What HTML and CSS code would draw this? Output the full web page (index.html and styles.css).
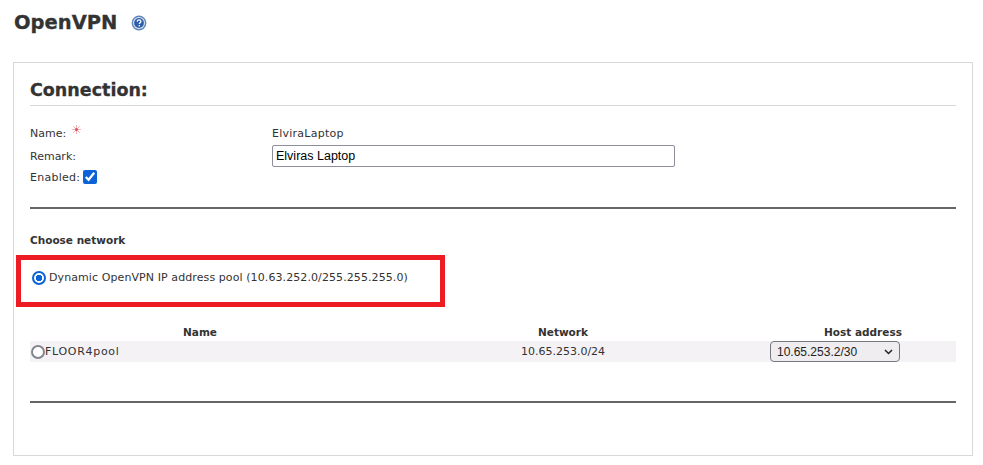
FILE: index.html
```html
<!DOCTYPE html>
<html lang="en">
<head>
<meta charset="utf-8">
<title>OpenVPN</title>
<link rel="stylesheet" href="styles.css">
</head>
<body>
<header class="page-head">
  <h1 class="page-title">OpenVPN</h1>
  <svg class="help" viewBox="0 0 16 16" width="16" height="16" aria-hidden="true">
    <circle cx="8" cy="8" r="7.4" fill="#5f86bd"/>
    <circle cx="8" cy="8" r="6" fill="#dfe8f4"/>
    <circle cx="8" cy="8" r="4.9" fill="#2f5fa8"/>
    <path d="M6.2 6.6C6.3 5.4 7 4.9 8 4.9c1.100 0 1.900.6 1.900 1.600 0 1.400-1.600 1.300-1.600 2.600" fill="none" stroke="#fff" stroke-width="1.300"/>
    <rect x="7.600" y="10" width="1.400" height="1.400" fill="#fff"/>
  </svg>
</header>
<main class="panel">
  <h2 class="section-title">Connection:</h2>
  <div class="fields">
    <div class="field"><span class="label name-label">Name: <svg class="req" viewBox="0 0 9 9" width="9" height="9" aria-hidden="true"><path d="M4.500 0v9M0 4.500h9M1.300 1.300l6.400 6.400M7.700 1.300L1.300 7.700" stroke="#f2b3b3" stroke-width="1"/><circle cx="4.500" cy="4.500" r="1.500" fill="#d9565c"/></svg></span><span class="value">ElviraLaptop</span></div>
    <div class="field"><label class="label" for="remark">Remark:</label><input class="text-input" id="remark" type="text" value="Elviras Laptop"></div>
    <div class="field-enabled"><label class="enabled-label" for="enabled">Enabled:</label><input class="check" id="enabled" type="checkbox" checked></div>
  </div>
  <hr class="rule rule-top">
  <h3 class="choose">Choose network</h3>
  <div class="highlight">
    <label class="pool"><input class="radio" type="radio" name="net" checked>Dynamic OpenVPN IP address pool (10.63.252.0/255.255.255.0)</label>
  </div>
  <table class="nets">
    <thead>
      <tr><th class="c-name">Name</th><th class="c-net">Network</th><th class="c-host">Host address</th></tr>
    </thead>
    <tbody>
      <tr>
        <td class="cell-name"><label class="pool-name"><input class="radio" type="radio" name="net">FLOOR4pool</label></td>
        <td class="cell-net">10.65.253.0/24</td>
        <td class="cell-host">
          <div class="select-wrap">
            <select class="host-select"><option>10.65.253.2/30</option></select>
            <svg class="chevron" viewBox="0 0 9 6" width="9" height="6" aria-hidden="true"><path d="M1 1l3.500 3.500L8 1" fill="none" stroke="#222" stroke-width="1.500"/></svg>
          </div>
        </td>
      </tr>
    </tbody>
  </table>
  <hr class="rule rule-bottom">
</main>
</body>
</html>
```
FILE: styles.css
```css
* { box-sizing: border-box; }
html, body { margin: 0; padding: 0; background: #fff; }
body {
  width: 983px;
  height: 465px;
  overflow: hidden;
  font-family: "DejaVu Sans", sans-serif;
  font-size: 11px;
  color: #333;
}
.page-head {
  display: flex;
  align-items: center;
  gap: 14px;
  height: 62px;
  padding: 0 0 16px 14px;
}
.page-title { margin: 0; font-size: 19.500px; font-weight: 700; color: #333; line-height: 46px; -webkit-text-stroke: .3px #333; }
.help { display: block; margin-top: -1px; }
.panel {
  margin-left: 13px;
  width: 960px;
  height: 394px;
  border: 1px solid #d8d8d8;
  padding: 16px 16px 0;
}
.section-title {
  margin: 0;
  height: 27px;
  border-bottom: 1px solid #d8d8d8;
  font-size: 17.500px;
  line-height: 22px;
  font-weight: 700;
  color: #333;
  -webkit-text-stroke: .3px #333;
}
.fields { padding-top: 16px; }
.field { display: flex; align-items: center; height: 23px; }
.label { width: 242px; }
.name-label { display: flex; align-items: center; gap: 6px; }
.req { margin-top: -9px; }
.value { color: #333; letter-spacing: .25px; }
.text-input {
  align-self: flex-start;
  width: 403px;
  height: 22px;
  padding: 0 3px;
  border: 1px solid #8d8d9d;
  border-radius: 2px;
  font-family: "Liberation Sans", sans-serif;
  font-size: 12.500px;
  color: #000;
}
.field-enabled { display: flex; align-items: center; height: 18px; gap: 3px; }
.enabled-label { letter-spacing: .25px; }
.check { width: 14px; height: 14px; margin: 0; accent-color: #0b63d8; }
.rule { border: 0; height: 2px; background: #666; margin: 0; }
.rule-top { margin-top: 21px; }
.choose { margin: 25px 0 0; font-size: 10.500px; line-height: 13px; font-weight: 700; color: #333; }
.highlight {
  margin: 8px 0 0 -14px;
  width: 429px;
  height: 52px;
  border: 5px solid #ed1c24;
  padding: 10px 0 0 11px;
}
.pool { display: flex; align-items: center; gap: 3px; height: 15px; letter-spacing: .09px; }
.radio {
  appearance: none;
  width: 14px;
  height: 14px;
  margin: 0;
  flex: none;
  border: 2px solid #85858f;
  border-radius: 50%;
  background: #fff;
}
.radio:checked {
  border-color: #0b63d8;
  background: radial-gradient(circle, #0b63d8 0 3px, #fff 3.500px);
}
.nets { width: 926px; margin-top: 17px; border-collapse: collapse; table-layout: fixed; }
.nets th { height: 17px; padding: 0 0 2px; font-size: 10.500px; font-weight: 700; color: #333; text-align: center; }
.nets td { height: 21px; padding: 0; background: #f5f2f6; text-align: center; }
.c-name { width: 340px; }
.c-net { width: 386px; }
.nets .c-host { width: 200px; padding-left: 14px; }
.nets td.cell-name { text-align: left; padding-left: 1px; }
.pool-name { display: flex; align-items: center; letter-spacing: .7px; }
.nets td.cell-host { text-align: left; padding-left: 14px; }
.select-wrap { position: relative; width: 130px; height: 21px; }
.host-select {
  appearance: none;
  display: block;
  width: 130px;
  height: 21px;
  padding: 0 0 0 6px;
  border: 1px solid #77777f;
  border-radius: 4px;
  background: #efedf0;
  font-family: "Liberation Sans", sans-serif;
  font-size: 12px;
  color: #222;
}
.chevron { position: absolute; right: 7px; top: 8px; pointer-events: none; }
.rule-bottom { margin-top: 39px; }
```
